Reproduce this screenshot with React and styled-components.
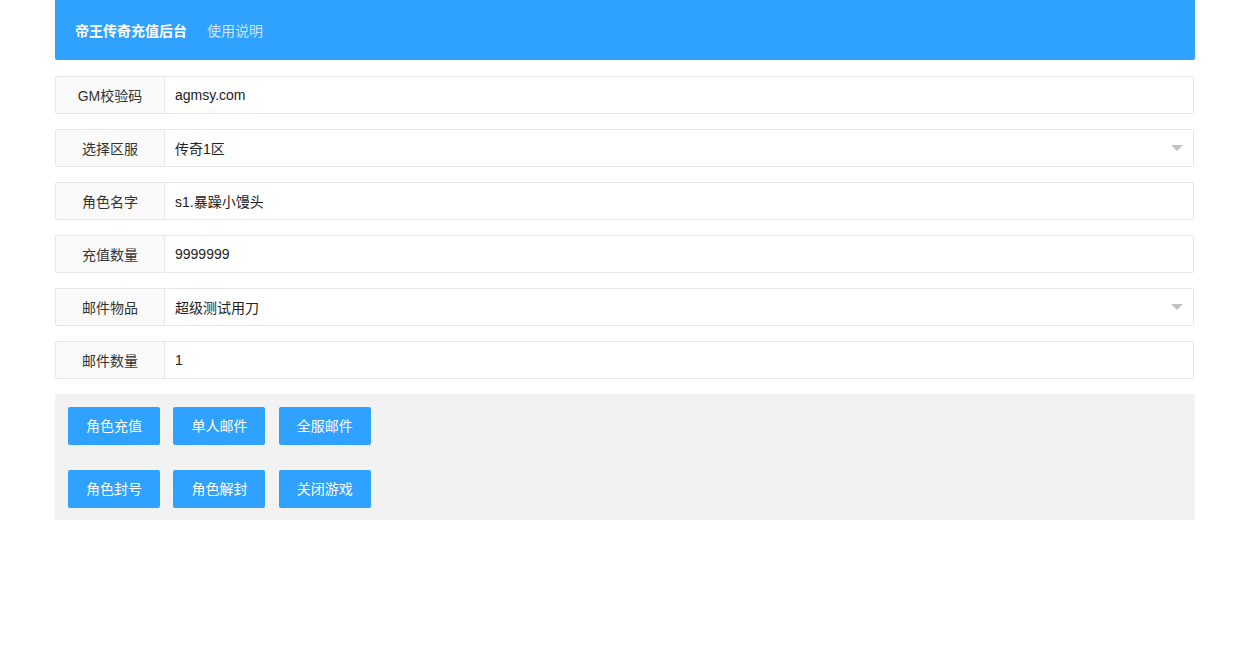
import React from "react"
import styled, { createGlobalStyle } from "styled-components"

const GlobalStyle = createGlobalStyle`
  body {
    margin: 0;
    background: #fff;
    font-family: "Liberation Sans", "Noto Sans CJK SC", Arial, sans-serif;
    color: #333;
  }
`

const fields = [
  { label: "GM校验码", value: "agmsy.com" },
  { label: "选择区服", value: "传奇1区", select: true },
  { label: "角色名字", value: "s1.暴躁小馒头" },
  { label: "充值数量", value: "9999999" },
  { label: "邮件物品", value: "超级测试用刀", select: true },
  { label: "邮件数量", value: "1" },
]

const buttonRows = [
  ["角色充值", "单人邮件", "全服邮件"],
  ["角色封号", "角色解封", "关闭游戏"],
]

const App = () => {
  return (
    <>
      <GlobalStyle />
      <Page>
        <Header>
          <Title>帝王传奇充值后台</Title>
          <HeaderLink>使用说明</HeaderLink>
        </Header>
        <Form>
          {fields.map((f) => (
            <FieldRow key={f.label}>
              <Label>{f.label}</Label>
              <InputBox>
                <span>{f.value}</span>
                {f.select && <Caret />}
              </InputBox>
            </FieldRow>
          ))}
        </Form>
        <ButtonPanel>
          {buttonRows.map((row, i) => (
            <ButtonRow key={i}>
              {row.map((b) => (
                <Button key={b}>{b}</Button>
              ))}
            </ButtonRow>
          ))}
        </ButtonPanel>
      </Page>
    </>
  )
}

export default App

const Page = styled.div`
  width: 1140px;
  margin-left: 55px;
`
const Header = styled.div`
  height: 60px;
  background: #2fa2ff;
  border-radius: 0 0 2px 2px;
  display: flex;
  align-items: center;
  padding-left: 20px;
  padding-bottom: 1px;
  box-sizing: border-box;
  gap: 20px;
`
const Title = styled.span`
  color: #fff;
  font-size: 14px;
  font-weight: bold;
`
const HeaderLink = styled.span`
  color: rgba(255, 255, 255, 0.75);
  font-size: 14px;
`
const Form = styled.div`
  margin-top: 16px;
  display: flex;
  flex-direction: column;
  gap: 15px;
`
const FieldRow = styled.div`
  display: flex;
  height: 38px;
  width: 1139px;
`
const Label = styled.div`
  width: 110px;
  box-sizing: border-box;
  border: 1px solid #e6e6e6;
  border-radius: 2px 0 0 2px;
  background: #fafafa;
  display: flex;
  align-items: center;
  justify-content: center;
  font-size: 14px;
  color: #333;
`
const InputBox = styled.div`
  position: relative;
  flex: 1;
  box-sizing: border-box;
  border: 1px solid #e6e6e6;
  border-left: none;
  border-radius: 0 2px 2px 0;
  display: flex;
  align-items: center;
  padding-left: 10px;
  font-size: 14px;
  color: #222;
`
const Caret = styled.i`
  position: absolute;
  right: 10px;
  top: 50%;
  margin-top: -3px;
  width: 0;
  height: 0;
  border-style: solid;
  border-width: 6px 6px 0 6px;
  border-color: #c2c2c2 transparent transparent transparent;
`
const ButtonPanel = styled.div`
  margin-top: 15px;
  background: #f2f2f2;
  padding: 13px 13px 12px;
  display: flex;
  flex-direction: column;
  gap: 25px;
`
const ButtonRow = styled.div`
  display: flex;
  gap: 13.4px;
`
const Button = styled.button`
  height: 38px;
  padding: 0 18px;
  border: none;
  border-radius: 2px;
  background: #2fa2ff;
  color: #fff;
  font-size: 14px;
  font-family: inherit;
  line-height: 38px;
  cursor: pointer;
  width: 92px;
  white-space: nowrap;
`
